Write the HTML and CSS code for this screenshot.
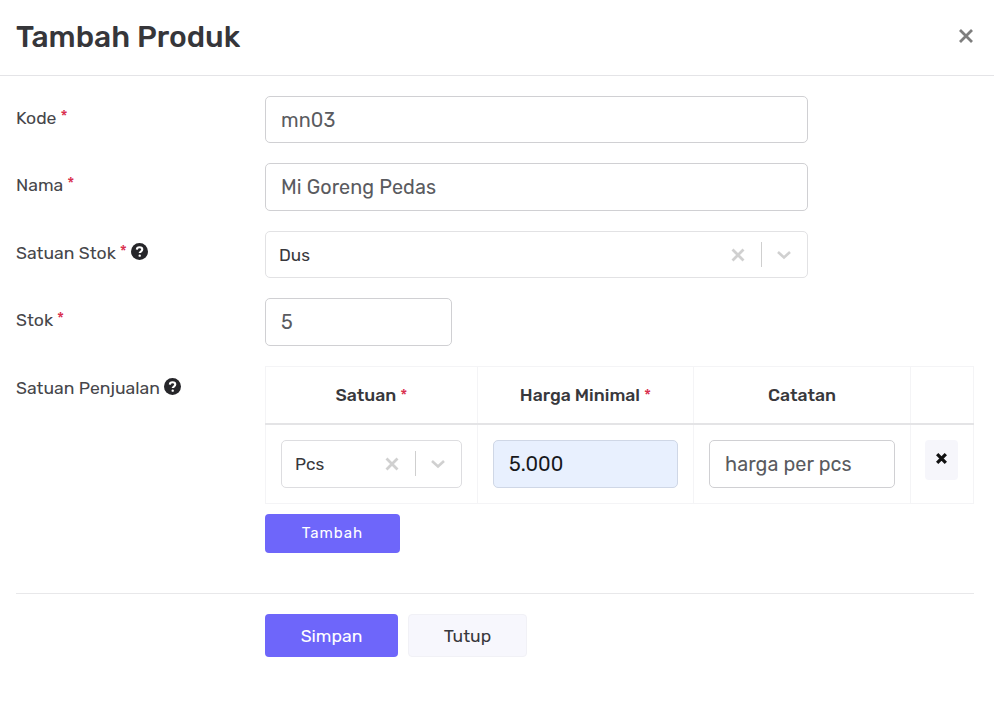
FILE: index.html
```html
<!DOCTYPE html>
<html lang="id">
<head>
<meta charset="utf-8">
<title>Tambah Produk</title>
<link rel="stylesheet" href="styles.css">
</head>
<body>
<div class="modal">
  <header class="modal-header">
    <h1 class="modal-title">Tambah Produk</h1>
    <button class="close" type="button" aria-label="Tutup">
      <svg viewBox="0 0 14 14" class="close-icon"><path d="M1 1l12 12M13 1L1 13"/></svg>
    </button>
  </header>
  <form class="modal-body">
    <div class="row">
      <label class="label">Kode <span class="req">*</span></label>
      <div class="field"><input class="input" value="mn03"></div>
    </div>
    <div class="row">
      <label class="label">Nama <span class="req">*</span></label>
      <div class="field"><input class="input tall" value="Mi Goreng Pedas"></div>
    </div>
    <div class="row">
      <label class="label">Satuan Stok <span class="req">*</span>
        <svg class="help" viewBox="0 0 16 16"><circle cx="8" cy="8" r="8"/><path class="help-q" d="M5.5 6.2C5.6 4.7 6.7 4 8 4c1.5 0 2.6.8 2.6 2.1 0 1.9-2.4 1.9-2.4 3.4"/><circle class="help-dot" cx="8.2" cy="11.9" r="1.1"/></svg>
      </label>
      <div class="field">
        <div class="select">
          <span class="select-value">Dus</span>
          <span class="select-tools">
            <svg class="sel-x" viewBox="0 0 14 14"><path d="M1.5 1.5l11 11M12.5 1.5l-11 11"/></svg>
            <i class="sel-sep"></i>
            <svg class="sel-chev" viewBox="0 0 16 10"><path d="M2 2l6 5.5L14 2"/></svg>
          </span>
        </div>
      </div>
    </div>
    <div class="row">
      <label class="label">Stok <span class="req">*</span></label>
      <div class="field"><input class="input tall narrow" value="5"></div>
    </div>
    <div class="row table-row">
      <label class="label">Satuan Penjualan
        <svg class="help" viewBox="0 0 16 16"><circle cx="8" cy="8" r="8"/><path class="help-q" d="M5.5 6.2C5.6 4.7 6.7 4 8 4c1.5 0 2.6.8 2.6 2.1 0 1.9-2.4 1.9-2.4 3.4"/><circle class="help-dot" cx="8.2" cy="11.9" r="1.1"/></svg>
      </label>
      <div class="table-field">
        <table class="units">
          <thead>
            <tr>
              <th class="c1">Satuan <span class="req">*</span></th>
              <th class="c2">Harga Minimal <span class="req">*</span></th>
              <th class="c3">Catatan</th>
              <th class="c4"></th>
            </tr>
          </thead>
          <tbody>
            <tr>
              <td>
                <div class="select small">
                  <span class="select-value">Pcs</span>
                  <span class="select-tools">
                    <svg class="sel-x" viewBox="0 0 14 14"><path d="M1.5 1.5l11 11M12.5 1.5l-11 11"/></svg>
                    <i class="sel-sep"></i>
                    <svg class="sel-chev" viewBox="0 0 16 10"><path d="M2 2l6 5.5L14 2"/></svg>
                  </span>
                </div>
              </td>
              <td><input class="input tall autofill" value="5.000"></td>
              <td><input class="input tall" value="harga per pcs"></td>
              <td>
                <button class="remove" type="button" aria-label="Hapus">
                  <svg viewBox="0 0 12 12"><path d="M2 2l8 8M10 2l-8 8"/></svg>
                </button>
              </td>
            </tr>
          </tbody>
        </table>
        <button class="btn primary add" type="button">Tambah</button>
      </div>
    </div>
    <hr class="sep">
    <div class="actions">
      <button class="btn primary save" type="button">Simpan</button>
      <button class="btn light" type="button">Tutup</button>
    </div>
  </form>
</div>
</body>
</html>
```
FILE: styles.css
```css
* { box-sizing: border-box; }
html, body { margin: 0; padding: 0; background: #fff; }
body { font-family: Rubik, Inter, "Noto Sans", sans-serif; color: #303030; height: 704px; overflow: hidden; }
.modal-header {
  height: 76px;
  border-bottom: 1px solid #e4e4e7;
  display: flex;
  align-items: center;
  justify-content: space-between;
  padding: 0 21px 2px 16px;
}
.modal-title { margin: 0; font-size: 30px; font-weight: 500; color: #36363a; letter-spacing: 0; }
.close { border: 0; background: none; padding: 0; width: 14px; height: 14px; display: flex; margin-bottom: 2px; }
.close-icon { width: 14px; height: 14px; fill: none; stroke: #7e7e7e; stroke-width: 2.8; }
.modal-body { padding: 20px 20px 0 16px; display: block; }
.row { display: flex; align-items: flex-start; margin-bottom: 20px; }
.label { width: 249px; flex: none; font-size: 17.6px; font-weight: 400; line-height: 24px; padding-top: 10px; color: #46464a; display: flex; align-items: center; gap: 4px; }
.req { color: #d9304f; margin-top: -2px; font-size: 16px; font-weight: 400; }
.help { width: 17px; height: 17px; margin-top: -3px; }
.help circle { fill: #26262a; }
.help .help-dot { fill: #fff; }
.help-q { fill: none; stroke: #fff; stroke-width: 2; }
.field { width: 543px; }
.input {
  display: block;
  width: 100%;
  height: 47px;
  border: 1px solid #d0d0d3;
  border-radius: 5px;
  padding: 0 15px;
  font: 400 19.8px Rubik, Inter, "Noto Sans", sans-serif;
  letter-spacing: 0.1px;
  color: #5a5b60;
  background: #fff;
}
.input.tall { height: 48px; }
.input.narrow { width: 187px; }
.input.autofill { background: #e8f0fe; border-color: #cfd7e6; color: #17181c; font-weight: 400; }
.select {
  height: 47px;
  border: 1px solid #e2e2e4;
  border-radius: 5px;
  display: flex;
  align-items: center;
  justify-content: space-between;
  padding: 0 15px 0 13px;
  font-size: 17.2px;
  font-weight: 400;
  color: #38383c;
}
.select.small { height: 48px; border-color: #dddde0; }
.select-tools { display: flex; align-items: center; }
.sel-x { width: 14px; height: 14px; fill: none; stroke: #d0d0d0; stroke-width: 2.8; }
.sel-sep { width: 1px; height: 25px; background: #cfcfcf; margin: 0 14px 0 16px; }
.sel-chev { width: 16px; height: 10px; fill: none; stroke: #d0d0d0; stroke-width: 2.6; }
.table-row { margin-bottom: 40px; }
.table-field { width: 709px; }
.units { width: 709px; border-collapse: collapse; table-layout: fixed; border: 1px solid #f4f4f6; }
.units th, .units td { border: 1px solid #f4f4f6; }
.units th { height: 57px; font-size: 17.6px; font-weight: 500; text-align: center; color: #38383c; border-bottom: 2px solid #e4e4e6; }
.units th .req { font-size: 16px; }
.units td { height: 80px; padding: 0 15px; }
.units .c1 { width: 212px; }
.units .c2 { width: 216px; }
.units .c3 { width: 217px; }
.remove { width: 33px; height: 40px; border: 0; border-radius: 4px; background: #f6f6fb; padding: 0 0 3px; display: flex; align-items: center; justify-content: center; margin-top: -8px; margin-left: -1px; }
.remove svg { width: 13px; height: 13px; fill: none; stroke: #111; stroke-width: 3; }
.btn { border: 0; border-radius: 4px; font-family: Rubik, Inter, "Noto Sans", sans-serif; display: block; }
.primary { background: #6e66fa; color: #fff; }
.add { width: 135px; height: 39px; margin-top: 10px; font-size: 15px; letter-spacing: 1px; font-weight: 400; padding-bottom: 2px; }
.sep { border: 0; border-top: 1px solid #e8e8ea; margin: 0 0 20px; width: 958px; }
.actions { display: flex; gap: 10px; padding-left: 249px; }
.save { width: 133px; height: 43px; font-size: 17.6px; font-weight: 400; }
.light { width: 119px; height: 43px; background: #f7f7fd; color: #38383c; font-size: 17.6px; font-weight: 400; border: 1px solid #f1f1f6; }
```
